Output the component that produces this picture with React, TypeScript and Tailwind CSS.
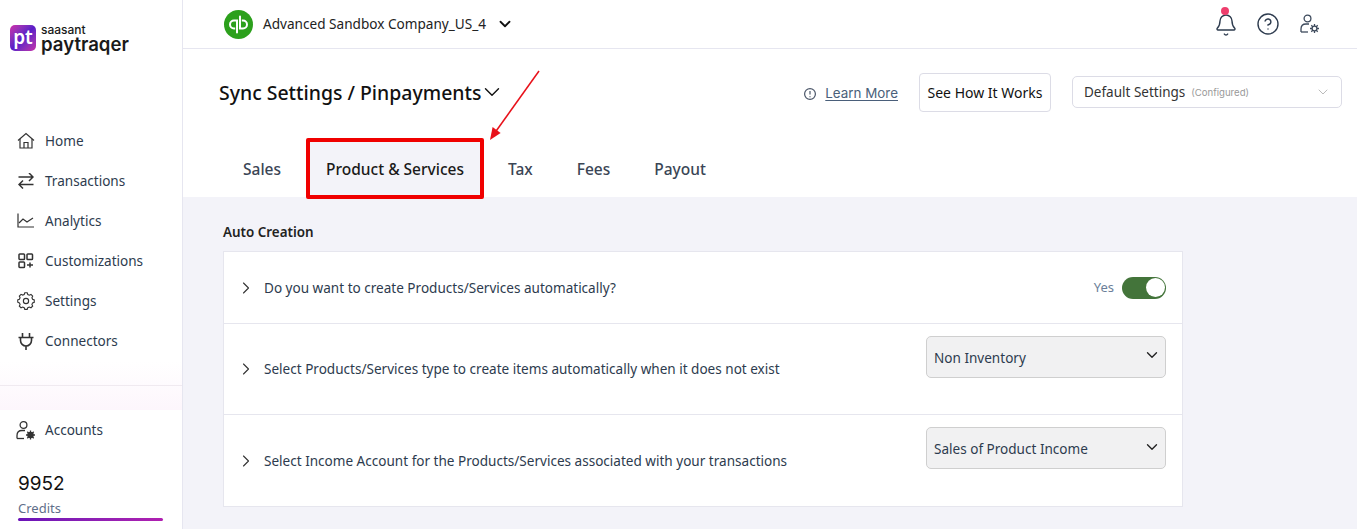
import { Bell, ChevronDown, ChevronRight, CircleHelp } from "lucide-react";

const navFont = "font-['Noto_Sans','Open_Sans',sans-serif]";

const HomeIcon = () => (
  <svg width="18" height="18" viewBox="0 0 18 18" fill="none" stroke="#333" strokeWidth="1.2">
    <path d="M1 8.5 9 1.5l8 7" />
    <path d="M3 7v9h12V7" />
    <path d="M7 16v-5.5h4V16" />
  </svg>
);

const TransactionsIcon = () => (
  <svg width="16" height="16" viewBox="0 0 16 16" fill="none" stroke="#333" strokeWidth="1.5">
    <path d="M0.5 4h14.5M11 0l4 4-4 4" />
    <path d="M15.5 11.5H1M5 7.5l-4 4 4 4" />
  </svg>
);

const AnalyticsIcon = () => (
  <svg width="18" height="18" viewBox="0 0 18 18" fill="none" stroke="#333" strokeWidth="1.2">
    <path d="M1 1.5V15h16" />
    <path d="M2 11l4-4 4 3 6-4" />
  </svg>
);

const CustomIcon = () => (
  <svg width="16" height="16" viewBox="0 0 16 16" fill="none" stroke="#333" strokeWidth="1.5">
    <rect x="1" y="1" width="5.5" height="5.5" rx="0.8" />
    <rect x="9" y="1" width="5.5" height="5.5" rx="0.8" />
    <rect x="1" y="9" width="5.5" height="5.5" rx="0.8" />
    <path d="M9 12h6M12 9.5v5" />
  </svg>
);

const SettingsIcon = () => (
  <svg width="18" height="18" viewBox="0 0 24 24" fill="none" stroke="#333" strokeWidth="1.5">
    <path d="M9.6 3.3 10.4 1h3.2l.8 2.3 2 .9 2.2-1 2.3 2.3-1 2.2.9 2 2.2.8v3.2l-2.2.8-.9 2 1 2.2-2.3 2.3-2.2-1-2 .9-.8 2.3h-3.2l-.8-2.3-2-.9-2.2 1-2.3-2.3 1-2.2-.9-2L1 13.6v-3.2l2.2-.8.9-2-1-2.2 2.3-2.3 2.2 1z" />
    <circle cx="12" cy="12" r="3.5" />
  </svg>
);

const ConnectorsIcon = () => (
  <svg width="16" height="17" viewBox="0 0 16 17" fill="none" stroke="#333" strokeWidth="1.6">
    <path d="M4.5 0v4.5M11.5 0v4.5M0.5 4.5h15" />
    <path d="M2.5 4.5v3a5.5 5.5 0 0 0 11 0v-3M8 13v4" />
  </svg>
);

const UserGear = ({ size, color, solid }: { size: number; color: string; solid?: boolean }) => (
  <svg width={size} height={size} viewBox="0 0 20 20" fill="none" stroke={color} strokeWidth="1.3">
    <circle cx="7.5" cy="4.5" r="3.4" />
    <path d="M1 18v-3c0-3 2-5 5-5h3" />
    <path d="M1 18h7" />
    <circle cx="14.5" cy="14.5" r={solid ? 2.6 : 2.4} fill={solid ? color : "none"} />
    <path d="M14.5 10v2M14.5 17v2M10 14.5h2M17 14.5h2M11.3 11.3l1.4 1.4M16.3 16.3l1.4 1.4M11.3 17.7l1.4-1.4M16.3 12.7l1.4-1.4" />
  </svg>
);

const navItems = [
  { label: "Home", icon: <HomeIcon /> },
  { label: "Transactions", icon: <TransactionsIcon /> },
  { label: "Analytics", icon: <AnalyticsIcon /> },
  { label: "Customizations", icon: <CustomIcon /> },
  { label: "Settings", icon: <SettingsIcon /> },
  { label: "Connectors", icon: <ConnectorsIcon /> },
];

const tabs = ["Sales", "Product & Services", "Tax", "Fees", "Payout"];

const Logo = () => (
  <div className="flex items-center gap-[5px] pl-[10px] pt-[24px]">
    <div className="flex h-[26px] w-[26px] items-center justify-center rounded-[5px] bg-gradient-to-br from-[#d028a8] via-[#5a1cc8] to-[#c82aa8] pb-[2px] text-[19px] leading-none font-semibold text-white">
      pt
    </div>
    <div className="flex flex-col font-['Inter',sans-serif] text-[#1a1a1a]">
      <span className="text-[12px] leading-[12px] font-medium">saasant</span>
      <span className="text-[18.6px] leading-[16px] font-semibold">paytraqer</span>
    </div>
  </div>
);

const Sidebar = () => (
  <aside className={`flex h-[529px] w-[183px] shrink-0 flex-col border-r border-[#e6e6f0] bg-white ${navFont}`}>
    <Logo />
    <nav className="mt-[69px] flex flex-col">
      {navItems.map((item) => (
        <div key={item.label} className="flex h-[40px] items-center">
          <div className="flex w-[45px] justify-center pl-[16px] pr-[9px]">{item.icon}</div>
          <span className="text-[13.55px] text-[#2d3b4e]">{item.label}</span>
        </div>
      ))}
    </nav>
    <div className="flex-1 bg-gradient-to-b from-white to-[#fdf6fc]">
      <div className="h-[25px] border-b border-[#f0eaf0]" />
    </div>
    <div className="flex h-[40px] shrink-0 items-center">
      <div className="flex w-[45px] justify-center pl-[16px] pr-[9px]">
        <UserGear size={21} color="#333" solid />
      </div>
      <span className="text-[13.55px] text-[#2d3b4e]">Accounts</span>
    </div>
    <div className="flex h-[79px] shrink-0 flex-col pl-[18px] pt-[23px] font-['Inter',sans-serif]">
      <span className="text-[19px] leading-[22px] text-[#111]">9952</span>
      <span className={`mt-[4px] text-[13px] leading-[18px] text-[#5f6f8a] ${navFont}`}>Credits</span>
      <div className="mt-px h-[3px] w-[145px] rounded-full bg-gradient-to-r from-[#6a12b8] to-[#b01fb0]" />
    </div>
  </aside>
);

const Header = () => (
  <header className={`flex h-[49px] items-center justify-between border-b border-[#e6e6f0] pl-[41px] pr-[37px] ${navFont}`}>
    <div className="flex items-center">
      <svg width="29" height="29" viewBox="0 0 29 29">
        <circle cx="14.5" cy="14.5" r="14.5" fill="#2ca01c" />
        <path
          d="M10 9.5a5 5 0 0 0 0 10h1.2v-2H10a3 3 0 0 1 0-6h2v11a1 1 0 0 0 2 0V9.5zM19 19.5a5 5 0 0 0 0-10h-1.2v2H19a3 3 0 0 1 0 6h-2v-11a1 1 0 0 0-2 0v13z"
          fill="#fff"
        />
      </svg>
      <span className="ml-[10px] text-[13.6px] text-[#222]">Advanced Sandbox Company_US_4</span>
      <ChevronDown size={18} strokeWidth={2.4} color="#111" className="ml-[10px]" />
    </div>
    <div className="flex items-center gap-[18px]">
      <div className="relative mt-[2px]">
        <Bell size={24} strokeWidth={1.4} color="#2d3b4e" />
        <span className="absolute -top-[6px] left-[7px] h-[8px] w-[8px] rounded-full bg-[#ee3e6d]" />
      </div>
      <CircleHelp size={24} strokeWidth={1.4} color="#2d3b4e" />
      <div className="ml-[2px]">
        <UserGear size={20} color="#3d4a5c" />
      </div>
    </div>
  </header>
);

const TitleRow = () => (
  <div className={`flex h-[89px] items-center justify-between pl-[36px] pr-[15px] ${navFont}`}>
    <div className="flex items-center">
      <h1 className="-mt-[1px] text-[19.45px] font-medium text-[#111]">Sync Settings / Pinpayments</h1>
      <ChevronDown size={26} strokeWidth={1.3} color="#111" className="mb-[3px] -ml-[2px]" />
    </div>
    <div className="flex items-center">
      <svg width="14" height="14" viewBox="0 0 14 14" fill="none" stroke="#4a5568" strokeWidth="1.2">
        <circle cx="7" cy="7" r="5.4" />
        <path d="M7 4v3.6M7 9.2v1" />
      </svg>
      <a className="ml-[8px] font-['Inter',sans-serif] text-[13.4px] text-[#4a5f7a] underline underline-offset-2">Learn More</a>
      <button className="ml-[21px] -mt-[2px] h-[39px] w-[132px] rounded-[4px] border border-[#dcdce6] bg-white text-[14px] text-[#111]">
        See How It Works
      </button>
      <div className="ml-[21px] -mt-[3px] flex h-[32px] w-[270px] items-center justify-between rounded-[5px] border border-[#dcdce6] bg-white pl-[11px] pr-[10px]">
        <div className="flex items-center">
          <span className="text-[13.5px] text-[#333]">Default Settings</span>
          <span className="ml-[6px] mt-[2px] font-['Inter',sans-serif] text-[9.6px] text-[#999]">(Configured)</span>
        </div>
        <ChevronDown size={16} strokeWidth={1} color="#999" />
      </div>
    </div>
  </div>
);

const Tabs = () => (
  <div className={`flex h-[59px] items-center pl-[60px] text-[15.5px] font-medium text-[#3a4555] ${navFont}`}>
    {tabs.map((tab) => {
      const active = tab === "Product & Services";
      return (
        <div
          key={tab}
          className={
            active
              ? "ml-[25px] mr-[24px] flex h-[61px] w-[178px] translate-y-px items-center justify-center rounded-[2px] border-[4px] border-[#f00000] bg-[#f3f3f9] pt-[2px] text-[#1a1a1a]"
              : "mt-[4px] mr-[44px] first:mr-0 last:mr-0"
          }
        >
          {tab}
        </div>
      );
    })}
  </div>
);

const Row = ({ label, height, children }: { label: string; height: string; children: React.ReactNode }) => (
  <div className={`flex ${height} items-center justify-between border-b border-[#e6e6ee] pl-[12px] pr-[16px] last:border-b-0`}>
    <div className="flex items-center">
      <ChevronRight size={20} strokeWidth={1.3} color="#333" />
      <span className="ml-[8px] pt-px text-[13.55px] text-[#2d3b4e]">{label}</span>
    </div>
    {children}
  </div>
);

const Select = ({ value }: { value: string }) => (
  <div className="-mt-[25px] flex h-[42px] w-[240px] items-center justify-between rounded-[5px] border border-[#cfcfcf] bg-[#f1f1f2] pl-[7px] pr-[4px] text-[13.55px] text-[#2d3b4e]">
    <span className="pt-[3px]">{value}</span>
    <ChevronDown size={18} strokeWidth={1.8} color="#222" className="-mt-[3px]" />
  </div>
);

const Content = () => (
  <section className={`flex-1 bg-[#f3f3f9] pl-[40px] pt-[25px] ${navFont}`}>
    <h2 className="text-[13.4px] leading-[20px] font-semibold text-[#222]">Auto Creation</h2>
    <div className="mt-[9px] flex w-[960px] flex-col border border-[#e6e6ee] bg-white">
      <Row label="Do you want to create Products/Services automatically?" height="h-[72px]">
        <div className="flex items-center">
          <span className="mr-[8px] text-[13px] text-[#6b7f99]">Yes</span>
          <div className="flex h-[22px] w-[44px] items-center justify-end rounded-full bg-[#43743a] pr-[1px]">
            <span className="h-[19px] w-[19px] rounded-full bg-white" />
          </div>
        </div>
      </Row>
      <Row label="Select Products/Services type to create items automatically when it does not exist" height="h-[91px]">
        <Select value="Non Inventory" />
      </Row>
      <Row label="Select Income Account for the Products/Services associated with your transactions" height="h-[91px]">
        <Select value="Sales of Product Income" />
      </Row>
    </div>
  </section>
);

export default function App() {
  return (
    <div className="relative flex h-[529px] w-[1357px] overflow-hidden bg-white">
      <Sidebar />
      <main className="flex min-w-0 flex-1 flex-col">
        <Header />
        <TitleRow />
        <Tabs />
        <Content />
      </main>
      {/* annotation arrow */}
      <svg className="absolute left-[485px] top-[68px]" width="60" height="75" viewBox="0 0 60 75" fill="none">
        <path d="M54 3 9 66" stroke="#e8111a" strokeWidth="1.5" />
        <path d="M5 72l2.6-13 8 6z" fill="#e8111a" />
      </svg>
    </div>
  );
}
